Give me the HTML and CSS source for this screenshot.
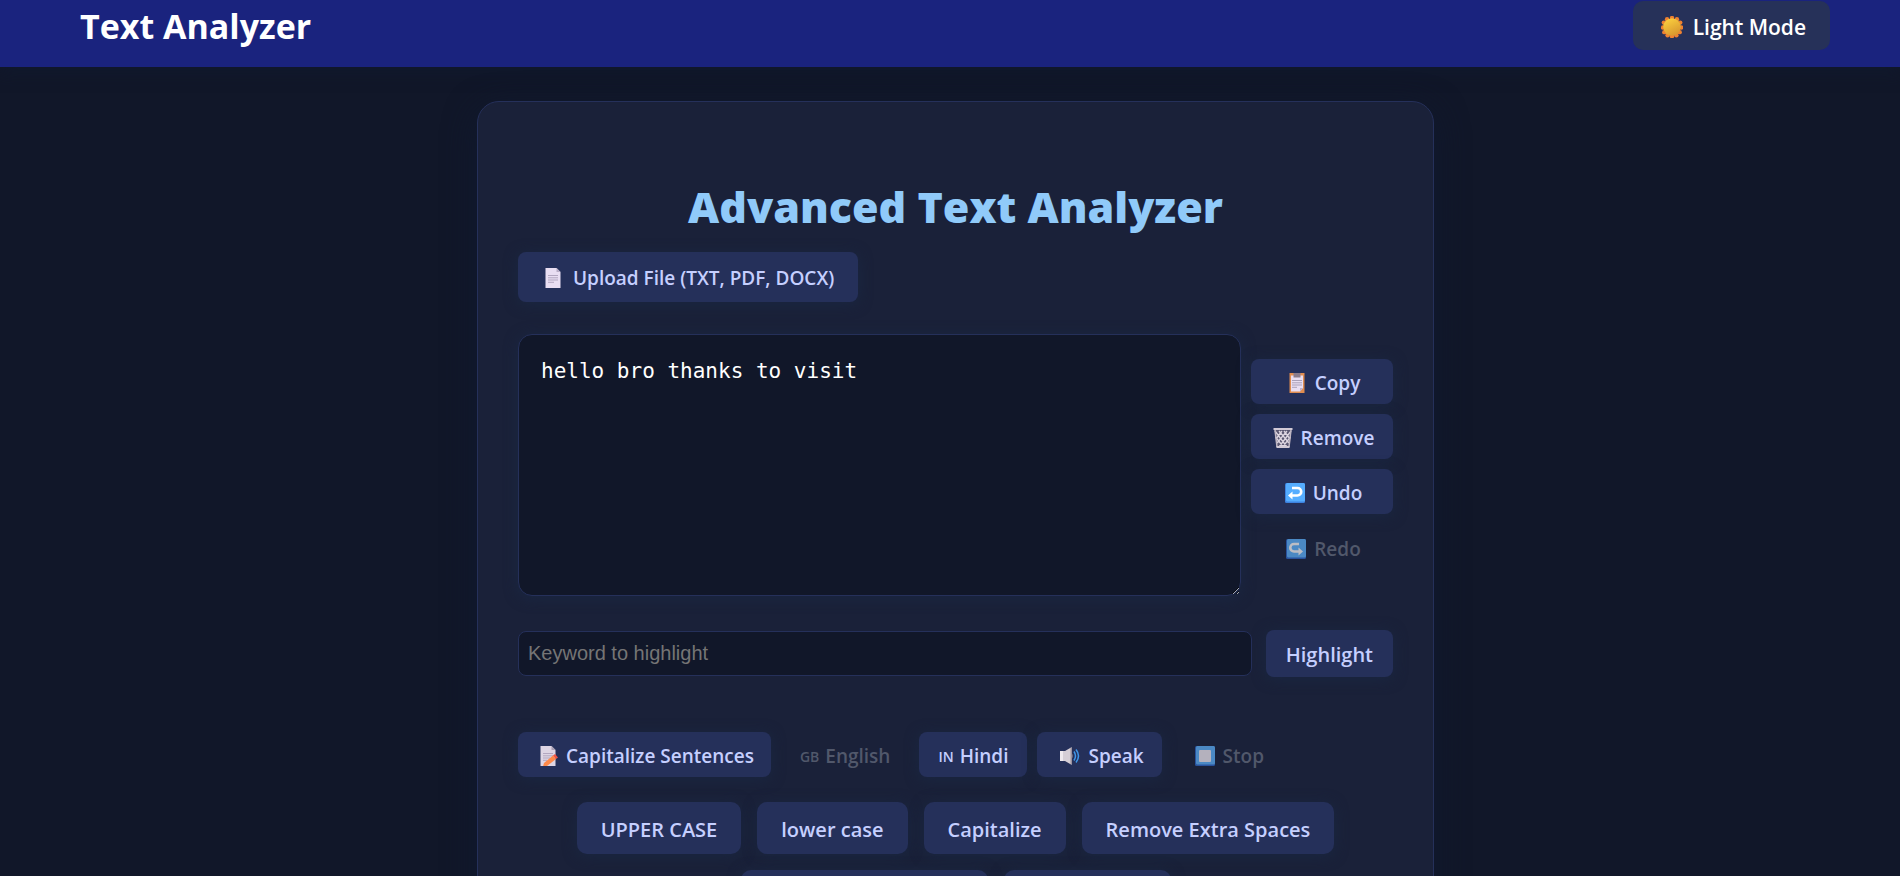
FILE: index.html
```html
<!DOCTYPE html>
<html lang="en">
<head>
<meta charset="utf-8">
<title>Text Analyzer</title>
<link rel="stylesheet" href="styles.css">
</head>
<body>
<header class="topbar">
  <div class="brand">Text Analyzer</div>
  <button class="btn theme" type="button">
    <svg class="icon" viewBox="0 0 20 20" aria-hidden="true"><defs><linearGradient id="sun" x1="0" y1="0" x2="0.5" y2="1"><stop offset="0" stop-color="#ffd640"/><stop offset="1" stop-color="#d9992f"/></linearGradient></defs><g fill="#ee8130"><circle cx="10" cy="1.800" r="2"/><circle cx="14.500" cy="3" r="2"/><circle cx="17.500" cy="6" r="2"/><circle cx="18.400" cy="10.500" r="2"/><circle cx="17" cy="14.700" r="2"/><circle cx="14" cy="17.500" r="2"/><circle cx="10" cy="18.400" r="2"/><circle cx="6" cy="17.500" r="2"/><circle cx="3" cy="14.700" r="2"/><circle cx="1.800" cy="10.500" r="2"/><circle cx="2.600" cy="6" r="2"/><circle cx="5.500" cy="3" r="2"/></g><circle cx="10" cy="10" r="8" fill="url(#sun)"/></svg>
    <span>Light Mode</span>
  </button>
</header>
<main class="page">
  <section class="card">
    <h1 class="title">Advanced Text Analyzer</h1>
    <button class="btn upload" type="button">
      <svg class="icon" viewBox="0 0 20 20" aria-hidden="true"><path d="M2.500 0h11l4 4v16h-15z" fill="#e9def2"/><path d="M13.500 0v4h4z" fill="#b9adc6"/><path d="M5 7.500h10M5 9.800h10M5 12h10M5 14.300h6" stroke="#b3a7c0"/></svg>
      <span>Upload File (TXT, PDF, DOCX)</span>
    </button>
    <div class="editor">
      <textarea class="text" aria-label="Text">hello bro thanks to visit</textarea>
      <div class="actions">
        <button class="btn" type="button">
          <svg class="icon" viewBox="0 0 20 20" aria-hidden="true"><path d="M2.500 0h15v20h-15z" fill="#e08d50"/><path d="M4 2.500h12V15l-3 3.500H4z" fill="#e9def2"/><path d="M13 18.500V15h3z" fill="#bdb0cb"/><path d="M6.500 0h7v4.500h-7z" fill="#8a7c8c"/><path d="M5 7.500h10M5 9.800h10M5 12h10M5 14.300h5" stroke="#aaa0b8"/></svg>
          <span>Copy</span></button>
        <button class="btn" type="button">
          <svg class="icon" viewBox="0 0 20 20" aria-hidden="true"><path d="M1.500 2h17l-2 17.500h-13z" fill="#5b5872"/><path d="M2 3l12 16M6 3l10 12M11 3l6 8M2.500 9l8 10M18 3L6 19M14 3L4 15M9 3l-6 8M17.500 9l-8 10" stroke="#dcd5e0" stroke-width="1.300"/><path d="M2 2l2 17M18 2l-2 17" stroke="#bdb5c2" stroke-width="1.500"/><path d="M.5 1h19M3.500 19h13" stroke="#d2cad6" stroke-width="1.800"/></svg>
          <span>Remove</span></button>
        <button class="btn" type="button">
          <svg class="icon" viewBox="0 0 20 20" aria-hidden="true"><rect width="20" height="20" rx="1.500" fill="#3d82e0"/><rect x="1" width="19" height="18.500" rx="1.500" fill="#55adff"/><path d="M7 5h5.500a3.700 3.700 0 0 1 0 7.500H6" fill="none" stroke="#fff" stroke-width="2.600"/><path d="M7.500 8.500v8l-4.500-4z" fill="#fff"/></svg>
          <span>Undo</span></button>
        <button class="btn redo" type="button" disabled>
          <svg class="icon" viewBox="0 0 20 20" aria-hidden="true"><rect width="20" height="20" rx="1.500" fill="#2f68c8"/><rect x="1" width="19" height="18.500" rx="1.500" fill="#60b6ff"/><path d="M13 5H8a3.700 3.700 0 0 0 0 7.500h6" fill="none" stroke="#fff" stroke-width="2.600"/><path d="M12.500 8.500v8l4.500-4z" fill="#fff"/></svg>
          <span>Redo</span></button>
      </div>
    </div>
    <div class="search">
      <input class="keyword" type="text" placeholder="Keyword to highlight" aria-label="Keyword to highlight">
      <button class="btn highlight" type="button">Highlight</button>
    </div>
    <div class="tools">
      <button class="btn" type="button">
        <svg class="icon" viewBox="0 0 20 20" aria-hidden="true"><path d="M2.500 0h11l4 4v16h-15z" fill="#ded5e4"/><path d="M13.500 0v4h4z" fill="#aaa0b5"/><path d="M5 7.500h10M5 9.800h10M5 12h7M5 14.300h4" stroke="#b3a7c0"/><path d="M6 17l9-7.500 3 3.500-9 7-4 .5z" fill="#ff8a4a"/><path d="M15 9.500l2-1.500 3 3.500-2 1.500z" fill="#f05545"/></svg>
        <span>Capitalize Sentences</span></button>
      <button class="btn lang" type="button" disabled><span class="code">GB</span><span>English</span></button>
      <button class="btn lang" type="button"><span class="code">IN</span><span>Hindi</span></button>
      <button class="btn speech" type="button">
        <svg class="icon" viewBox="0 0 20 20" aria-hidden="true"><path d="M0 5h5l6-3.500h1v17h-1L5 15H0z" fill="#d5ced6"/><path d="M0 5h3v10H0z" fill="#eee9ee"/><path d="M10.500 2h1.500v16h-1.500z" fill="#9b929d"/><path d="M12 7.500q2 2.500 0 5" fill="#6d7285"/><path d="M14 5.500q3 4.500 0 9M16 3.500q5 6.500 0 13" fill="none" stroke="#3f96e8" stroke-width="1.500"/></svg>
        <span>Speak</span></button>
      <button class="btn speech" type="button" disabled>
        <svg class="icon" viewBox="0 0 20 20" aria-hidden="true"><rect width="20" height="20" rx="1.500" fill="#2f68c8"/><rect x="1" width="19" height="18.500" rx="1.500" fill="#60b6ff"/><rect x="4" y="4" width="12" height="12" rx="1" fill="#f6eef6"/></svg>
        <span>Stop</span></button>
    </div>
    <div class="cases">
      <button class="btn" type="button">UPPER CASE</button>
      <button class="btn" type="button">lower case</button>
      <button class="btn" type="button">Capitalize</button>
      <button class="btn" type="button">Remove Extra Spaces</button>
      <button class="btn wide" type="button"></button>
      <button class="btn mid" type="button"></button>
    </div>
  </section>
</main>
</body>
</html>
```
FILE: styles.css
```css
* { box-sizing: border-box; }
body {
  margin: 0;
  height: 100vh;
  overflow: hidden;
  background: #111729;
  color: #c5cfff;
  font-family: "Open Sans", "Noto Sans", sans-serif;
}
.topbar {
  display: flex;
  justify-content: space-between;
  align-items: flex-start;
  height: 67px;
  padding: 1px 70px 0 80px;
  background: #1a237e;
  box-shadow: 0 2px 16px #10192e;
}
.brand { font-size: 34px; line-height: 51px; font-weight: 700; color: #fff; }
.btn {
  display: inline-flex;
  align-items: center;
  justify-content: center;
  gap: 8px;
  min-height: 45px;
  padding: 3px 17px 0 20px;
  border: 0;
  border-radius: 8px;
  background: #25305a;
  color: #c5cfff;
  font-family: inherit;
  font-size: 19px;
  font-weight: 600;
  line-height: 27px;
  white-space: nowrap;
  box-shadow: 0 2px 14px #1a2742;
}
.btn:disabled { background: none; box-shadow: none; color: #51586b; }
.btn:disabled .icon { opacity: 0.7; }
.icon { width: 20px; height: 20px; flex: none; }
.theme {
  min-height: 49px;
  padding: 3px 24px 0 28px;
  gap: 10px;
  border-radius: 10px;
  color: #fff;
  font-size: 21px;
  background: #263159;
  box-shadow: none;
}
.theme .icon { width: 22px; height: 22px; }
.page { padding: 34px 0 0 11px; }
.card {
  max-width: 957px;
  margin: 0 auto;
  padding: 75px 40px 40px;
  border: 1px solid #25305a;
  border-radius: 22px;
  background: #1a2139;
  box-shadow: 0 8px 32px #10192e;
}
.title {
  margin: 0 0 15px;
  text-align: center;
  font-size: 43px;
  line-height: 60px;
  font-weight: 800;
  color: #90caf9;
}
.upload { min-height: 50px; padding: 2px 24px 0 25px; gap: 10px; }
.editor { display: flex; align-items: center; gap: 10px; margin-top: 32px; }
.text {
  flex: 1;
  min-width: 0;
  height: 262px;
  padding: 22px;
  border: 1px solid #25305a;
  border-radius: 14px;
  background: #111729;
  color: #fff;
  font-family: "DejaVu Sans Mono", monospace;
  font-size: 21px;
  line-height: 28px;
  box-shadow: 0 2px 14px #1a2742;
}
.actions { display: flex; flex-direction: column; gap: 10px; width: 142px; }
.redo { min-height: 47px; }
.search { display: flex; align-items: center; gap: 14px; margin-top: 34px; }
.keyword {
  flex: 1;
  min-width: 0;
  height: 45px;
  padding: 0 9px;
  border: 1px solid #25305a;
  border-radius: 8px;
  background: #111729;
  color: #fff;
  font-family: "Liberation Sans", sans-serif;
  font-size: 20px;
}
.keyword::placeholder { color: #757575; }
.highlight { min-height: 47px; padding: 2px 20px 0; font-size: 20px; }
.tools { display: flex; gap: 10px; margin-top: 55px; }
.speech { padding: 3px 18px 0 23px; }
.lang { padding: 3px 19px 0; gap: 6px; }
.code { font-size: 14px; }
.cases { display: flex; flex-wrap: wrap; justify-content: center; gap: 16px; margin-top: 25px; }
.cases .btn { min-height: 52px; padding: 2px 24px 0; border-radius: 10px; font-size: 20px; }
.cases .wide { width: 247px; }
.cases .mid { width: 167px; }
```
